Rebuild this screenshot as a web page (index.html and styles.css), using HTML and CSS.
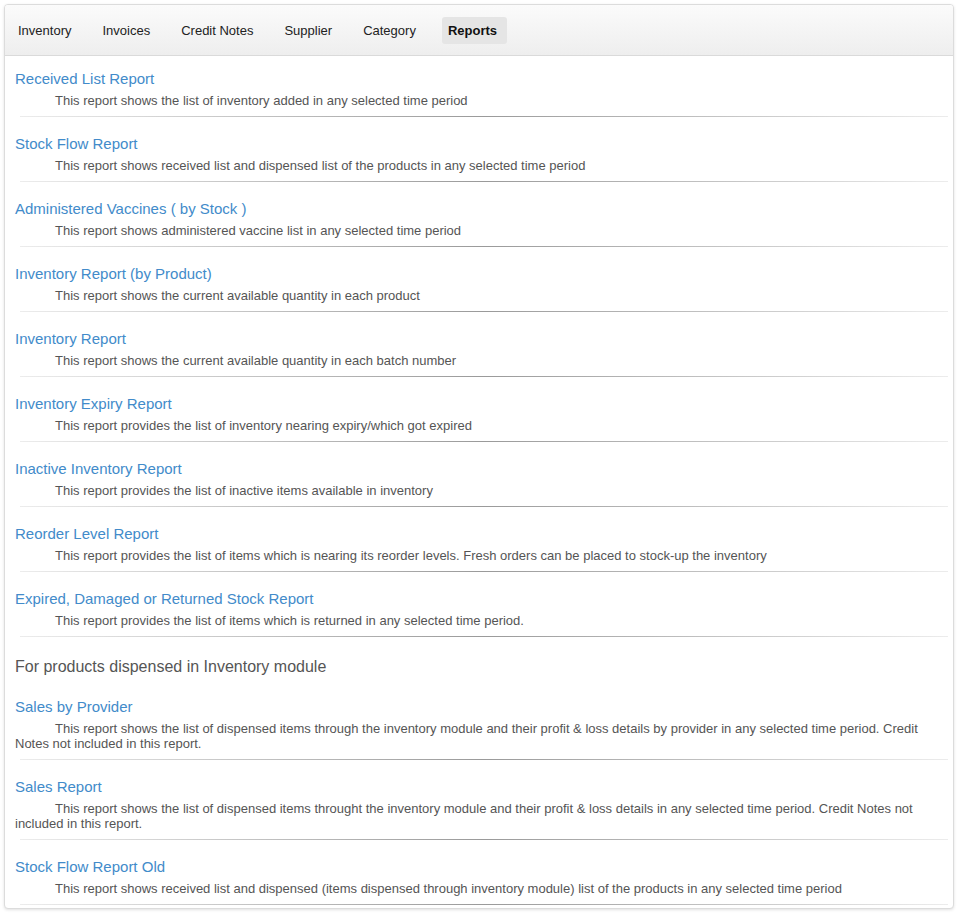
FILE: index.html
```html
<!DOCTYPE html>
<html>
<head>
<meta charset="utf-8">
<link rel="stylesheet" href="styles.css">
</head>
<body>
<div class="panel">
  <div class="tabs">
    <span class="tab">Inventory</span>
    <span class="tab">Invoices</span>
    <span class="tab">Credit Notes</span>
    <span class="tab">Supplier</span>
    <span class="tab">Category</span>
    <span class="tab active">Reports</span>
  </div>
  <div class="content">
    <div class="item">
      <a class="title">Received List Report</a>
      <p class="desc">This report shows the list of inventory added in any selected time period</p>
      <div class="rule"></div>
    </div>
    <div class="item">
      <a class="title">Stock Flow Report</a>
      <p class="desc">This report shows received list and dispensed list of the products in any selected time period</p>
      <div class="rule"></div>
    </div>
    <div class="item">
      <a class="title">Administered Vaccines ( by Stock )</a>
      <p class="desc">This report shows administered vaccine list in any selected time period</p>
      <div class="rule"></div>
    </div>
    <div class="item">
      <a class="title">Inventory Report (by Product)</a>
      <p class="desc">This report shows the current available quantity in each product</p>
      <div class="rule"></div>
    </div>
    <div class="item">
      <a class="title">Inventory Report</a>
      <p class="desc">This report shows the current available quantity in each batch number</p>
      <div class="rule"></div>
    </div>
    <div class="item">
      <a class="title">Inventory Expiry Report</a>
      <p class="desc">This report provides the list of inventory nearing expiry/which got expired</p>
      <div class="rule"></div>
    </div>
    <div class="item">
      <a class="title">Inactive Inventory Report</a>
      <p class="desc">This report provides the list of inactive items available in inventory</p>
      <div class="rule"></div>
    </div>
    <div class="item">
      <a class="title">Reorder Level Report</a>
      <p class="desc">This report provides the list of items which is nearing its reorder levels. Fresh orders can be placed to stock-up the inventory</p>
      <div class="rule"></div>
    </div>
    <div class="item">
      <a class="title">Expired, Damaged or Returned Stock Report</a>
      <p class="desc">This report provides the list of items which is returned in any selected time period.</p>
      <div class="rule"></div>
    </div>
    <h3 class="section">For products dispensed in Inventory module</h3>
    <div class="item">
      <a class="title">Sales by Provider</a>
      <p class="desc">This report shows the list of dispensed items through the inventory module and their profit &amp; loss details by provider in any selected time period. Credit Notes not included in this report.</p>
      <div class="rule"></div>
    </div>
    <div class="item">
      <a class="title">Sales Report</a>
      <p class="desc">This report shows the list of dispensed items throught the inventory module and their profit &amp; loss details in any selected time period. Credit Notes not included in this report.</p>
      <div class="rule"></div>
    </div>
    <div class="item">
      <a class="title">Stock Flow Report Old</a>
      <p class="desc">This report shows received list and dispensed (items dispensed through inventory module) list of the products in any selected time period</p>
      <div class="rule"></div>
    </div>
  </div>
</div>
</body>
</html>
```

FILE: styles.css
```css
html, body {
  margin: 0;
  padding: 0;
  background: #ffffff;
}
body {
  font-family: "Liberation Sans", Arial, sans-serif;
  padding: 4px;
}
.panel {
  border: 1px solid #dcdcdc;
  border-radius: 4px;
  box-shadow: 0 1px 3px rgba(0, 0, 0, 0.12);
  background: #fff;
  overflow: hidden;
}
.tabs {
  height: 51px;
  box-sizing: border-box;
  display: flex;
  align-items: center;
  gap: 15px;
  padding: 0 0 0 5px;
  background: linear-gradient(to bottom, #fbfbfb, #eeeeee);
  border-bottom: 1px solid #dadada;
}
.tab {
  font-size: 13px;
  line-height: 15px;
  padding: 6px 8px;
  color: #222;
  border-radius: 3px;
}
.tab.active {
  font-weight: bold;
  color: #111;
  background: #e5e5e5;
  margin-left: 3px;
  padding: 6px 10px 6px 6px;
}
.content {
  padding: 13px 5px 3px 10px;
}
.item {
  display: block;
}
.title {
  display: block;
  font-size: 15px;
  line-height: 20px;
  color: #428bca;
  text-decoration: none;
}
.desc {
  margin: 4px 0 0 0;
  font-size: 13px;
  line-height: 15px;
  color: #555;
  text-indent: 40px;
}
.rule {
  height: 1px;
  margin: 8px 0 17px 5px;
  background: linear-gradient(to right, #ececec, #9a9a9a 50%, #ececec);
}
.item:last-child .rule {
  margin-bottom: 0;
}
.section {
  margin: 0 0 17px 0;
  font-size: 16px;
  line-height: 26px;
  font-weight: normal;
  color: #555;
}
```
